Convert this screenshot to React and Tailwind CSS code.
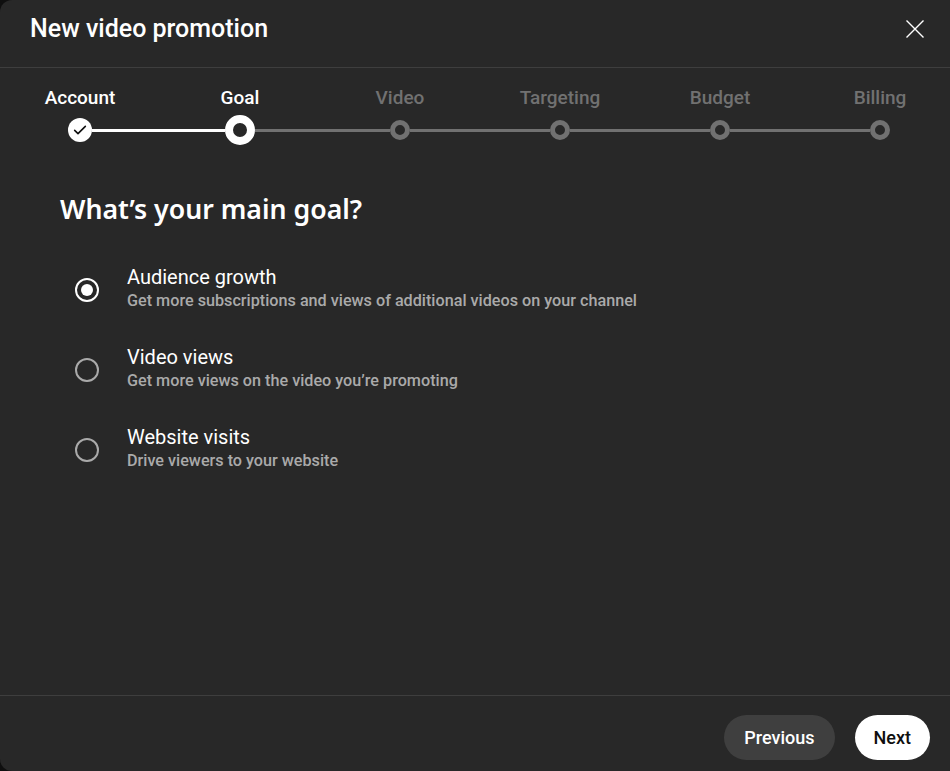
import React from "react";

const steps = ["Account", "Goal", "Video", "Targeting", "Budget", "Billing"];

const options = [
  { title: "Audience growth", desc: "Get more subscriptions and views of additional videos on your channel", selected: true },
  { title: "Video views", desc: "Get more views on the video you’re promoting", selected: false },
  { title: "Website visits", desc: "Drive viewers to your website", selected: false },
];

function StepDot({ i }) {
  if (i === 0) {
    return (
      <div className="w-[24px] h-[24px] rounded-full bg-white flex items-center justify-center shrink-0">
        <svg width="16" height="16" viewBox="0 0 24 24" fill="none" stroke="#0f0f0f" strokeWidth="2.4" strokeLinecap="round" strokeLinejoin="round">
          <path d="M4 12.5l5 5L20 6.5" />
        </svg>
      </div>
    );
  }
  if (i === 1) {
    return <div className="w-[30px] h-[30px] rounded-full border-[8px] border-white bg-[#282828] shrink-0" />;
  }
  return <div className="w-[20px] h-[20px] rounded-full border-[5px] border-[#717171] bg-[#282828] shrink-0" />;
}

export default function App() {
  return (
    <div className="w-[950px] h-[771px] bg-[#0f0f0f] overflow-hidden" style={{ fontFamily: "Roboto, 'Liberation Sans', sans-serif" }}>
      <div className="w-full h-full bg-[#282828] rounded-l-[12px] flex flex-col overflow-hidden">
        <div className="h-[68px] shrink-0 flex items-start justify-between pl-[30px] pr-[24px] pt-[15px] border-b border-[#3e3e3e]">
          <h1 className="text-[25px] leading-[28px] font-medium text-white">New video promotion</h1>
          <button className="w-[22px] h-[28px] flex items-center justify-center text-white">
            <svg width="20" height="20" viewBox="0 0 20 20" fill="none" stroke="white" strokeWidth="1.4">
              <path d="M1.5 1.5l17 17M18.5 1.5l-17 17" />
            </svg>
          </button>
        </div>

        <div className="flex-1 flex flex-col">
          <div className="grid grid-cols-6 w-[960px] pt-[18px]">
            {steps.map((s, i) => {
              const active = i <= 1;
              const leftColor = i === 0 ? "bg-transparent" : i === 1 ? "bg-white" : "bg-[#717171]";
              const rightColor = i === 5 ? "bg-transparent" : i === 0 ? "bg-white" : "bg-[#717171]";
              return (
                <div key={s} className="flex flex-col items-center">
                  <div className={`text-[19px] leading-[24px] font-medium ${active ? "text-white" : "text-[#717171]"}`}>{s}</div>
                  <div className="w-full h-[30px] mt-[5px] flex items-center">
                    <div className={`flex-1 h-[3px] ${leftColor}`} />
                    <StepDot i={i} />
                    <div className={`flex-1 h-[3px] ${rightColor}`} />
                  </div>
                </div>
              );
            })}
          </div>

          <h2 className="mt-[46px] ml-[60px] text-[26.7px] leading-[36px] font-semibold text-white" style={{ fontFamily: "'Noto Sans', sans-serif" }}>
            What’s your main goal?
          </h2>

          <div className="mt-[37px] flex flex-col gap-[32px]">
            {options.map((o) => (
              <div key={o.title} className="flex items-start pl-[75px] gap-[28px]">
                <div className={`mt-[14px] w-[24px] h-[24px] rounded-full border-2 flex items-center justify-center shrink-0 ${o.selected ? "border-white" : "border-[#aaaaaa]"}`}>
                  {o.selected && <div className="w-[12px] h-[12px] rounded-full bg-white" />}
                </div>
                <div className="flex flex-col">
                  <div className="text-[20px] leading-[26px] text-white">{o.title}</div>
                  <div className="text-[16.2px] leading-[22px] font-medium text-[#aaaaaa]">{o.desc}</div>
                </div>
              </div>
            ))}
          </div>
        </div>

        <div className="h-[76px] shrink-0 border-t border-[#3e3e3e] flex items-start justify-end gap-[20px] pt-[19px] pr-[20px]">
          <button className="h-[45px] px-[20px] rounded-full bg-[#3f3f3f] text-white text-[18px] font-medium">Previous</button>
          <button className="h-[45px] px-[19px] rounded-full bg-white text-[#0f0f0f] text-[18px] font-medium">Next</button>
        </div>
      </div>
    </div>
  );
}
